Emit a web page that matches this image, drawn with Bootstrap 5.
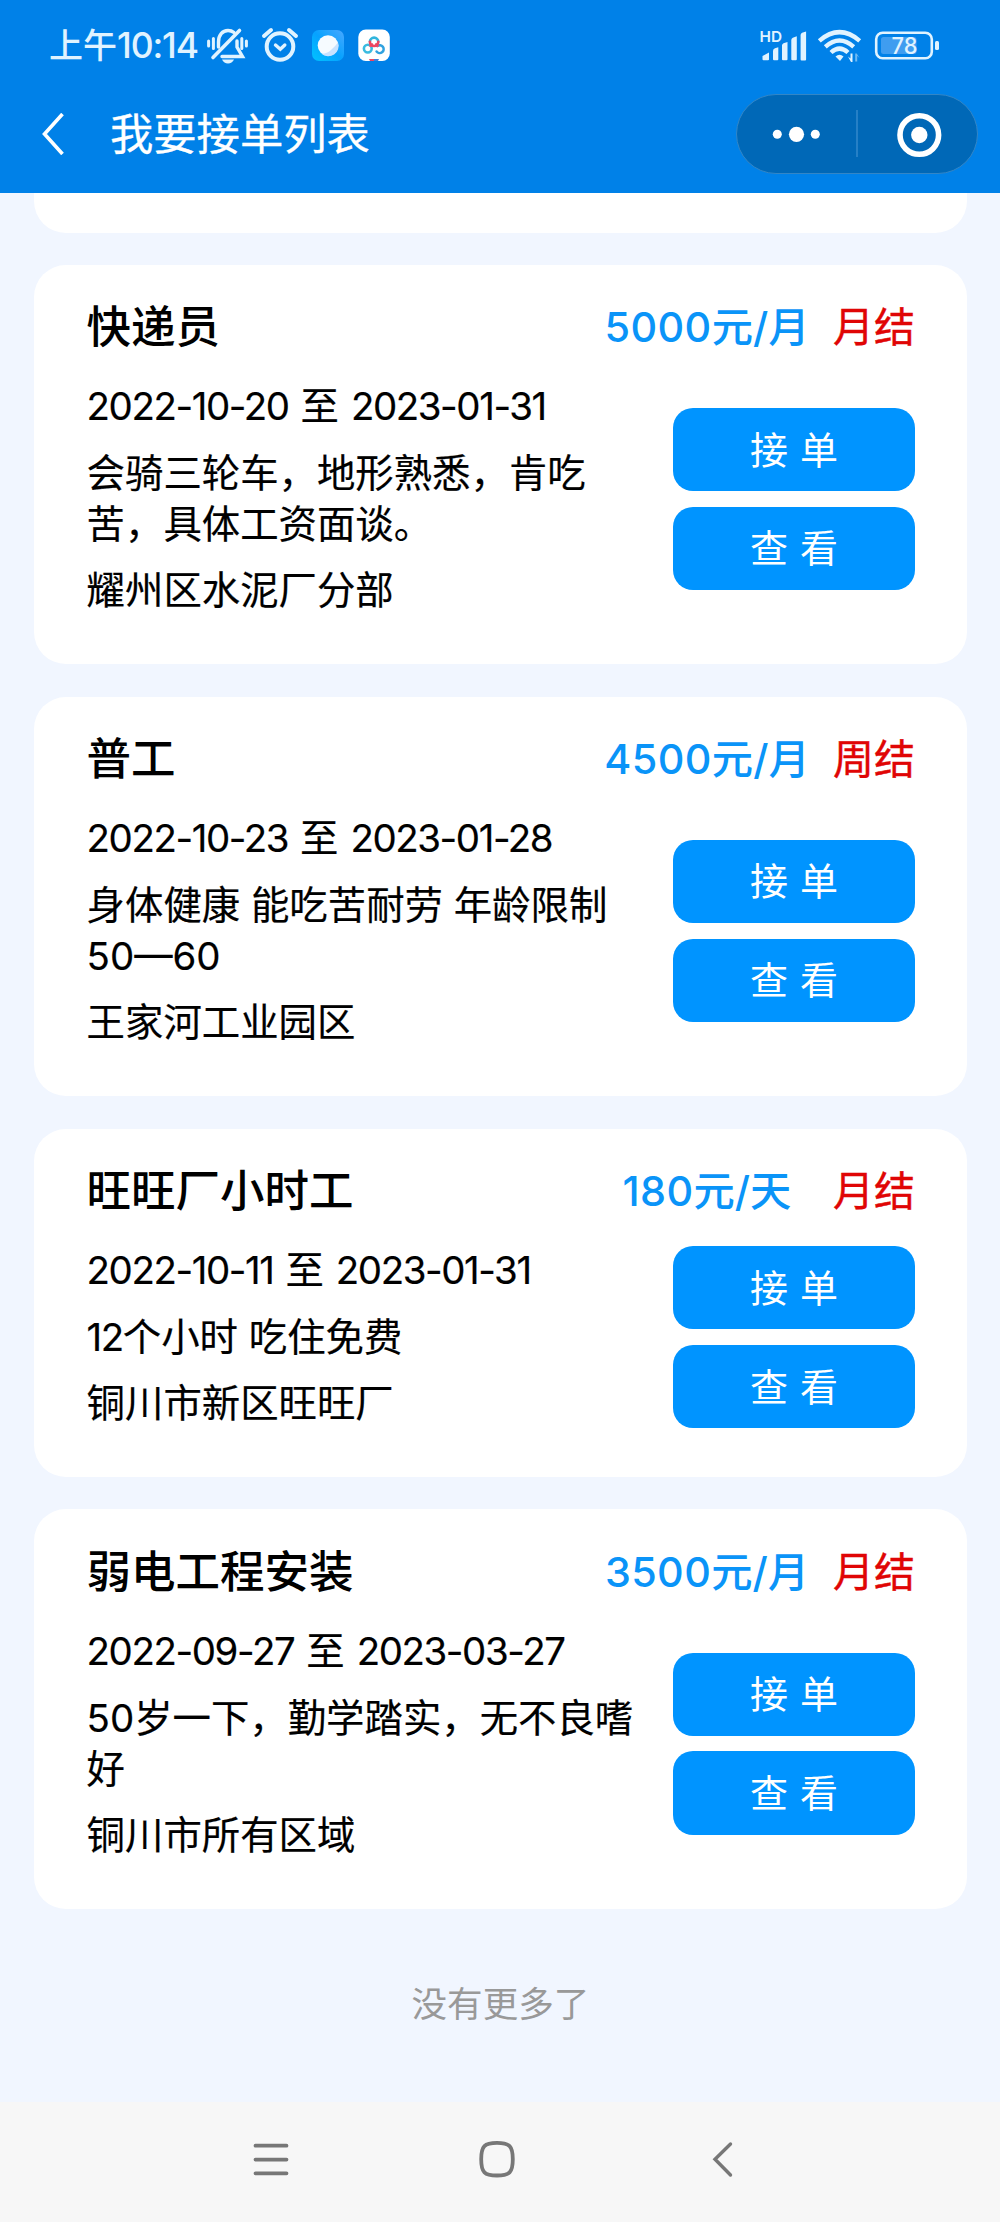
<!DOCTYPE html>
<html lang="zh-CN">
<head>
<meta charset="utf-8">
<meta name="viewport" content="width=device-width, initial-scale=1">
<title>我要接单列表</title>
<link rel="stylesheet" href="https://cdn.jsdelivr.net/npm/bootstrap@5.3.0/dist/css/bootstrap.min.css">
<style>
  body{font-family:Inter,"Noto Sans CJK SC",sans-serif;background:#f1f6ff;color:#000;height:2222px;overflow:hidden}
  svg{display:block;flex:none}
  .app-head{background:#0081e8;height:193.3px;color:#fff}
  .status-row{height:88px;padding:3px 60px 0 49px;color:#e0f3ff}
  .clock{font-size:34px;line-height:50px;width:158px;white-space:nowrap;font-weight:500}
  .clock .num{font-size:35.5px;letter-spacing:-1.1px}
  .title-row{height:92px;padding:0 22px 0 42px}
  .page-name{font-size:43.3px;line-height:60px;margin:0 0 0 46px;font-weight:400;-webkit-text-stroke:.3px #fff}
  .capsule{width:242px;height:80px;border-radius:40px;background:#0068b7;border:1px solid #3386c6}
  .job-list{padding:0 33px 0 34px}
  .job-card{background:#fff;border-radius:32px;margin-bottom:32.2px;padding:32.4px 52px 48px 52.6px}
  .job-tail{background:#fff;border-radius:0 0 32px 32px;height:40px;margin-bottom:31.5px}
  .job-name{font-size:44.5px;line-height:60px;font-weight:500;margin:0}
  .pay{font-size:41.3px;line-height:60px;width:206px;color:#0a94f8;font-weight:500;white-space:nowrap}
  .settle{font-size:41px;line-height:60px;width:82px;margin-left:23px;color:#e00505;white-space:nowrap;-webkit-text-stroke:.4px #e00505}
  .job-body{margin-top:24.3px}
  .job-info{gap:15.5px;font-size:38.4px;line-height:51px;width:550px;-webkit-text-stroke:.2px #000}
  .num{letter-spacing:-1.4px}
  .range{word-spacing:1.2px}
  .wide-dash{letter-spacing:0}
  .pay .num{letter-spacing:.4px}
  .acts{width:242px;gap:15.5px}
  .btn-job{background:#0094ff;color:#fff;height:83.3px;border:0;border-radius:20px;font-size:38px;line-height:50px;padding:0;word-spacing:1.5px}
  .btn-job:hover{background:#0088ee;color:#fff}
  .no-more{font-size:35.6px;line-height:50px;color:#999;margin-top:71px}
  .sys-nav{background:#f7f7f7;height:120px}
</style>
<script src="https://cdn.jsdelivr.net/npm/bootstrap@5.3.0/dist/js/bootstrap.bundle.min.js"></script>
</head>
<body class="d-flex flex-column">
<header class="app-head flex-shrink-0">
  <div class="status-row d-flex align-items-center">
    <div class="clock">上午<span class="num">10:14</span></div>
    <!-- muted bell, alarm and two app badges -->
    <svg width="184" height="38" viewBox="207 27 184 38" fill="none" stroke="#e0f3ff" stroke-linecap="round">
      <g stroke-width="3">
        <path d="M208.6 41v5M213.4 38.5v10M246.4 41v5M241.8 38.5v10"/>
        <path d="M218.5 47V42c0-7 4-11.500 9.500-11.500 2.500 0 4.500.8 6 2M237 41v6l5.500 9.500H222" stroke-width="3.4"/>
        <path d="M213 57.500L239.500 30.500" stroke-width="3.600"/>
      </g>
      <path d="M222 59.500h12q-2 4-6 4t-6-4z" fill="#e0f3ff" stroke="none"/>
      <circle cx="280" cy="46.500" r="13.300" stroke-width="4"/>
      <path d="M264 36l7-6M296 36l-7-6" stroke-width="4"/>
      <path d="M275.500 45l4.800 4.200 4.500-4.200" stroke-width="3.400"/>
      <defs>
        <linearGradient id="gb" x1="0" y1="1" x2="1" y2="0"><stop offset="0" stop-color="#00c4ff"/><stop offset=".5" stop-color="#06a2ff"/><stop offset="1" stop-color="#4aa8ff"/></linearGradient>
      </defs>
      <rect x="312" y="30" width="32" height="31" rx="7" fill="url(#gb)" stroke="none"/>
      <circle cx="328" cy="45.500" r="10.300" fill="#f6fbff" stroke="none"/>
      <path d="M338 42.500a10.300 10.300 0 0 1-16.500 11.200q5 .3 9.500-3.700t7-7.500z" fill="#c7e2ff" stroke="none"/>
      <rect x="358.300" y="29.500" width="31.500" height="31.500" rx="7.500" fill="#fff" stroke="none"/>
      <g stroke-width="2.600">
        <circle cx="367.800" cy="48.600" r="3.900" stroke="#3bbbe0"/>
        <path d="M376.600 51.500a3.900 3.900 0 1 0 .8-5.500" stroke="#31a2df"/>
        <path d="M370.500 45.800l1.500-1.500M377.500 45.800l-1.300-1.500" stroke="#e85570"/>
        <path d="M369.900 41.800a4.200 4.200 0 0 1 8.400 0" stroke="#31b5dd"/>
        <path d="M369.900 41.800a4.200 4.200 0 0 0 8.400 0" stroke="#ee4560"/>
      </g>
      <path d="M369 59h5v2h-4z" fill="#ee4560" stroke="none"/><path d="M374 59h5l-1 2h-4z" fill="#3d7fd9" stroke="none"/>
    </svg>
    <!-- signal, wifi, battery -->
    <svg class="ms-auto" width="180" height="38" viewBox="761 27 180 38" fill="#e0f3ff">
      <text x="760.500" y="41.800" font-family="Inter" font-weight="600" font-size="15" textLength="22.500" lengthAdjust="spacingAndGlyphs">HD</text>
      <path d="M763.500 56l6.500-3.500v7q0 .8-1 .8h-4.500q-1 0-1-1zM774 51q0-2 2-2.800l3.300-1v12q0 1-1 1H775q-1 0-1-1zM783 45.500q0-1.500 1.500-2.300l4-1.200v17.300q0 1-1 1H784q-1 0-1-1zM792.300 40q0-1.500 1.500-2.300l4-1.500v23q0 1-1 1h-3.500q-1 0-1-1zM801.600 35q0-1.500 1.500-2.300l4-1.300v28q0 1-1 1h-3.500q-1 0-1-1z"/>
      <g fill="none" stroke="#e0f3ff" stroke-width="4.400">
        <path d="M820.300 40.800q20.200-17.300 40.400 0"/>
        <path d="M826.300 46.800q14.200-12.500 28.400 0"/>
        <path d="M832 52.500q8.500-7.800 17 0"/>
      </g>
      <path d="M836.500 56.500q4-3.500 8 0l-3.500 4.500z"/>
      <path d="M849 56.500l2.500 2V53.500h2V62h-1.500z"/><path d="M860.500 58l-2.300-2.300V61.500h-2V53.500h1.500z" fill="#6fb9f2"/>
      <rect x="877.200" y="32.700" width="55.600" height="25.600" rx="6.500" fill="none" stroke="#e0f3ff" stroke-width="2.600"/>
      <rect x="882" y="37" width="35.500" height="17" rx="2.500" fill="#3f9df0"/>
      <rect x="936" y="41" width="4" height="9" rx="1.500"/>
      <text x="892.500" y="54" font-family="Inter" font-weight="500" font-size="22.500" textLength="26" lengthAdjust="spacingAndGlyphs">78</text>
    </svg>
  </div>
  <div class="title-row d-flex align-items-center">
    <svg width="22" height="42" viewBox="0 0 22 42" fill="none" stroke="#fff" stroke-width="3.600"><path d="M20.500 1L2.500 21l18 20"/></svg>
    <h1 class="page-name">我要接单列表</h1>
    <div class="capsule ms-auto">
      <svg width="240" height="78" viewBox="737 95 240 78" fill="#fff">
        <circle cx="777.300" cy="134.300" r="4.500"/><circle cx="796.500" cy="134.300" r="7.600"/><circle cx="815.300" cy="134.300" r="4.500"/>
        <rect x="856" y="110" width="2" height="47" fill="#2680c6"/>
        <circle cx="919.300" cy="135" r="19.300" fill="none" stroke="#fff" stroke-width="5.600"/><circle cx="919.300" cy="135" r="8.200"/>
      </svg>
    </div>
  </div>
</header>

<main class="job-list flex-grow-1">
  <div class="job-tail"></div>

  <article class="job-card">
    <div class="d-flex align-items-center">
      <h2 class="job-name me-auto">快递员</h2>
      <div class="pay text-center"><span class="num">5000</span>元/月</div><div class="settle">月结</div>
    </div>
    <div class="job-body d-flex align-items-center justify-content-between">
      <div class="job-info d-flex flex-column">
        <div class="range"><span class="num">2022-10-20</span> 至 <span class="num">2023-01-31</span></div>
        <div>会骑三轮车，地形熟悉，肯吃<br>苦，具体工资面谈。</div>
        <div>耀州区水泥厂分部</div>
      </div>
      <div class="acts d-flex flex-column"><button class="btn btn-job" type="button">接 单</button><button class="btn btn-job" type="button">查 看</button></div>
    </div>
  </article>

  <article class="job-card">
    <div class="d-flex align-items-center">
      <h2 class="job-name me-auto">普工</h2>
      <div class="pay text-center"><span class="num">4500</span>元/月</div><div class="settle">周结</div>
    </div>
    <div class="job-body d-flex align-items-center justify-content-between">
      <div class="job-info d-flex flex-column">
        <div class="range"><span class="num">2022-10-23</span> 至 <span class="num">2023-01-28</span></div>
        <div>身体健康 能吃苦耐劳 年龄限制<br><span class="wide-dash">50—60</span></div>
        <div>王家河工业园区</div>
      </div>
      <div class="acts d-flex flex-column"><button class="btn btn-job" type="button">接 单</button><button class="btn btn-job" type="button">查 看</button></div>
    </div>
  </article>

  <article class="job-card">
    <div class="d-flex align-items-center">
      <h2 class="job-name me-auto">旺旺厂小时工</h2>
      <div class="pay text-center"><span class="num">180</span>元/天</div><div class="settle">月结</div>
    </div>
    <div class="job-body d-flex align-items-center justify-content-between">
      <div class="job-info d-flex flex-column">
        <div class="range"><span class="num">2022-10-11</span> 至 <span class="num">2023-01-31</span></div>
        <div><span class="num">12</span>个小时 吃住免费</div>
        <div>铜川市新区旺旺厂</div>
      </div>
      <div class="acts d-flex flex-column"><button class="btn btn-job" type="button">接 单</button><button class="btn btn-job" type="button">查 看</button></div>
    </div>
  </article>

  <article class="job-card">
    <div class="d-flex align-items-center">
      <h2 class="job-name me-auto">弱电工程安装</h2>
      <div class="pay text-center"><span class="num">3500</span>元/月</div><div class="settle">月结</div>
    </div>
    <div class="job-body d-flex align-items-center justify-content-between">
      <div class="job-info d-flex flex-column">
        <div class="range"><span class="num">2022-09-27</span> 至 <span class="num">2023-03-27</span></div>
        <div>50岁一下，勤学踏实，无不良嗜<br>好</div>
        <div>铜川市所有区域</div>
      </div>
      <div class="acts d-flex flex-column"><button class="btn btn-job" type="button">接 单</button><button class="btn btn-job" type="button">查 看</button></div>
    </div>
  </article>

  <p class="no-more text-center mb-0">没有更多了</p>
</main>

<nav class="sys-nav flex-shrink-0 d-flex justify-content-center">
  <svg width="1000" height="120" viewBox="0 2102 1000 120" fill="none" stroke="#777" stroke-width="3.800" stroke-linecap="round">
    <path d="M255.500 2145.700h31M255.500 2159.600h31M255.500 2173.300h31"/>
    <path d="M497 2142.900c12.500 0 15.800 3 15.800 16.300s-3.300 16.300-15.800 16.300-15.800-3-15.800-16.300 3.300-16.300 15.800-16.300z"/>
    <path d="M730.500 2144l-15.500 15.300 15.500 15.700" stroke-width="3.400"/>
  </svg>
</nav>
</body>
</html>
